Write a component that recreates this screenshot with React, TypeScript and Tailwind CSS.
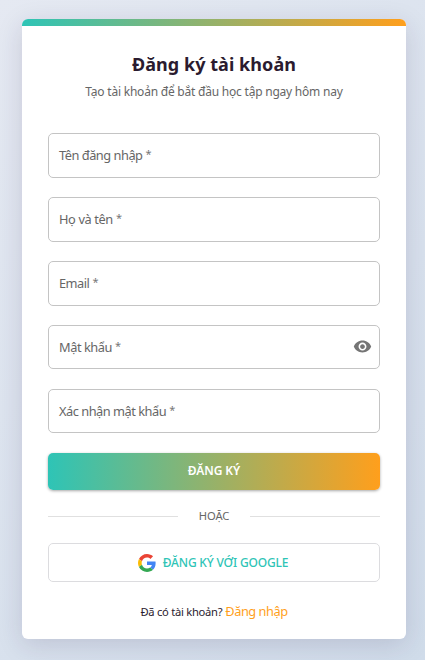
import { MdVisibility } from "react-icons/md";

const fields = [
  { label: "Tên đăng nhập", box: "h-[45px] mb-[19px]", tracking: "tracking-[-0.48px]" },
  { label: "Họ và tên", box: "h-[45px] mb-[19px]", tracking: "tracking-[-0.38px]" },
  { label: "Email", box: "h-[45px] mb-[19px]", tracking: "tracking-[-0.5px]" },
  { label: "Mật khẩu", box: "h-[44px] mb-5 pt-px", tracking: "tracking-[-0.45px]", toggle: true },
  { label: "Xác nhận mật khẩu", box: "h-[44px] mb-5 pt-px", tracking: "tracking-[-0.48px]" },
];

function GoogleLogo() {
  return (
    <svg viewBox="0 0 48 48" className="size-[18px]">
      <path fill="#EA4335" d="M24 9.5c3.54 0 6.71 1.22 9.21 3.6l6.85-6.85C35.9 2.38 30.47 0 24 0 14.62 0 6.51 5.38 2.56 13.22l7.98 6.19C12.43 13.72 17.74 9.5 24 9.5z" />
      <path fill="#4285F4" d="M46.98 24.55c0-1.57-.15-3.09-.38-4.55H24v9.02h12.94c-.58 2.96-2.26 5.48-4.78 7.18l7.73 6c4.51-4.18 7.09-10.36 7.09-17.65z" />
      <path fill="#FBBC05" d="M10.53 28.59c-.48-1.45-.76-2.99-.76-4.59s.27-3.14.76-4.59l-7.98-6.19C.92 16.46 0 20.12 0 24c0 3.88.92 7.54 2.56 10.78l7.97-6.19z" />
      <path fill="#34A853" d="M24 48c6.48 0 11.93-2.13 15.89-5.81l-7.73-6c-2.15 1.45-4.92 2.3-8.16 2.3-6.26 0-11.57-4.22-13.47-9.91l-7.98 6.19C6.51 42.62 14.62 48 24 48z" />
    </svg>
  );
}

export default function App() {
  return (
    <div className="h-[660px] w-[425px] overflow-hidden bg-[linear-gradient(135deg,#e5e9f2,#d0dcea)] pt-[19px] pl-[22px] font-['Noto_Sans','Open_Sans',sans-serif]">
      <main className="flex h-[620px] w-[384px] flex-col overflow-hidden rounded-[6px] bg-white shadow-[0_6px_26px_rgba(44,27,71,0.15)]">
        <div className="h-[7px] shrink-0 bg-[linear-gradient(90deg,#2ec4b6,#ff9f1c)]" />
        <div className="flex flex-col px-[26px]">
          <h1 className="mt-[26px] text-center text-[18px] leading-6 font-bold tracking-[0.05px] whitespace-nowrap text-[#2b1b2f]">Đăng ký tài khoản</h1>
          <p className="mt-[7px] mb-[32px] text-center text-[12px] leading-[18px] tracking-[-0.22px] whitespace-nowrap text-[#666]">
            Tạo tài khoản để bắt đầu học tập ngay hôm nay
          </p>
          {fields.map((f) => (
            <div
              key={f.label}
              className={`flex items-center justify-between rounded-[5px] border border-[#c4c4c4] pr-[7px] pl-[10px] text-[12.8px] text-[#666] ${f.box}`}
            >
              <label className="flex items-center gap-[3px]">
                <span className={f.tracking}>{f.label}</span>
                <span className="pb-0.5 text-[11px] text-[#777]">*</span>
              </label>
              {f.toggle && <MdVisibility className="mb-[3px] size-[19px] text-[#757575]" />}
            </div>
          ))}
          <button className="h-[37px] rounded-[5px] bg-[linear-gradient(90deg,#2ec4b6,#ff9f1c)] pb-px text-[12px] font-semibold tracking-[-0.1px] text-white shadow-[0_1px_3px_rgba(0,0,0,0.35)]">
            ĐĂNG KÝ
          </button>
          <div className="mt-4 flex h-5 items-center text-[11.2px] text-[#666]">
            <span className="h-px w-[130px] bg-[#e0e0e0]" />
            <span className="flex-1 text-center tracking-[-0.1px]">HOẶC</span>
            <span className="h-px w-[130px] bg-[#e0e0e0]" />
          </div>
          <button className="mt-[17px] flex h-[39px] items-center justify-center gap-[7px] rounded-[5px] border border-[#dcdcdf] pr-0.5 text-[12px] font-medium text-[#2ec4b6]">
            <GoogleLogo />
            <span className="tracking-[-0.2px] whitespace-nowrap">ĐĂNG KÝ VỚI GOOGLE</span>
          </button>
          <p className="mt-[19px] flex items-baseline justify-center gap-[3px] leading-5 whitespace-nowrap">
            <span className="text-[11.2px] tracking-[-0.27px] text-[#2b1b2f]">Đã có tài khoản?</span>
            <a className="text-[12.8px] tracking-[-0.48px] text-[#ff9f1c]">Đăng nhập</a>
          </p>
        </div>
      </main>
    </div>
  );
}
